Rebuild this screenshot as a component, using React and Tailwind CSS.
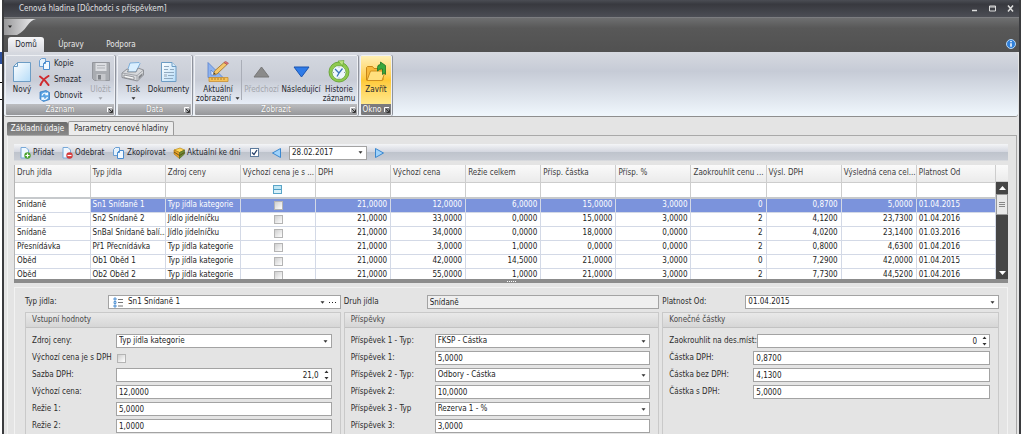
import React from 'react'

const columns = [
  'Druh jídla', 'Typ jídla', 'Zdroj ceny', 'Výchozí cena je s ...', 'DPH', 'Výchozí cena', 'Režie celkem',
  'Přísp. částka', 'Přísp. %', 'Zaokrouhlit cenu ...', 'Výsl. DPH', 'Výsledná cena cel...', 'Platnost Od',
]

const rows = [
  ['Snídaně', 'Sn1 Snídaně 1', 'Typ jídla kategorie', null, '21,0000', '12,0000', '6,0000', '15,0000', '3,0000', '0', '0,8700', '5,0000', '01.04.2015'],
  ['Snídaně', 'Sn2 Snídaně 2', 'Jídlo jídelníčku', null, '21,0000', '33,0000', '0,0000', '15,0000', '3,0000', '2', '4,1200', '23,7300', '01.04.2016'],
  ['Snídaně', 'SnBal Snídaně balí...', 'Jídlo jídelníčku', null, '21,0000', '34,0000', '0,0000', '18,0000', '0,0000', '2', '4,0200', '23,1400', '01.03.2016'],
  ['Přesnídávka', 'Př1 Přecnídávka', 'Typ jídla kategorie', null, '21,0000', '3,0000', '1,0000', '0,0000', '0,0000', '2', '0,8000', '4,6300', '01.04.2016'],
  ['Oběd', 'Ob1 Oběd 1', 'Typ jídla kategorie', null, '21,0000', '42,0000', '14,5000', '21,0000', '3,0000', '0', '7,2900', '42,0000', '01.04.2015'],
  ['Oběd', 'Ob2 Oběd 2', 'Typ jídla kategorie', null, '21,0000', '55,0000', '1,0000', '21,0000', '3,0000', '2', '7,7300', '44,5200', '01.04.2016'],
]

const PageIcon = ({ lines }) => (
  <svg width="20" height="22" viewBox="0 0 20 22">
    <defs>
      <linearGradient id="page" x1="0" y1="0" x2="1" y2="1">
        <stop offset="0" stopColor="#ffffff" />
        <stop offset="1" stopColor="#b5dcf8" />
      </linearGradient>
    </defs>
    {lines ? (
      <>
        <path d="M2.500 1.500h10.500l4 4v15h-14.500z" fill="url(#page)" stroke="#6c9cc4" />
        <path d="M13 1.500v4h4" fill="#d6ecfb" stroke="#6c9cc4" />
        <path d="M5 5.500h5M5 8.500h4M11 8.500h4M5 11.500h10M9 14.500h6M5 17.500h9" stroke="#8fa9c0" />
        <path d="M5 13h3v3H5z" fill="#b8c9d8" />
      </>
    ) : (
      <>
        <path d="M5.500 1.500h13v19h-17v-15z" fill="url(#page)" stroke="#6c9cc4" />
        <path d="M1.500 5.500h4v-4z" fill="#e6f4fd" stroke="#6c9cc4" />
      </>
    )}
  </svg>
)

const CopyIcon = () => (
  <svg width="11" height="12" viewBox="0 0 11 12">
    <path d="M.5 2.500l2-2h4v8h-6z" fill="#e6f2fc" stroke="#6b9fd3" />
    <path d="M4.500 5.500l2-2h4v8h-6z" fill="#f2f9ff" stroke="#4a8ccf" />
    <path d="M4.500 5.500h2v-2" fill="none" stroke="#4a8ccf" />
  </svg>
)

const DeleteIcon = () => (
  <svg width="11" height="11" viewBox="0 0 11 11">
    <path d="M1 1.500C4 3.500 7.500 7 9.500 10M9.500 1C6 3 3 6.500 1.500 10" fill="none" stroke="#cf2a2e" strokeWidth="2" strokeLinecap="round" />
  </svg>
)

const RefreshIcon = () => (
  <svg width="11" height="12" viewBox="0 0 11 12">
    <path d="M1 2l6-1.500 3.500 2v7L4.500 11.500 1 9z" fill="#5ba4e3" stroke="#2b71ba" strokeWidth=".7" />
    <path d="M3 5.500a3 3 0 0 1 5-1.500M8.500 2.500v2.200h-2.200M8.500 7a3 3 0 0 1-5 1.500M3 10V7.800h2.200" fill="none" stroke="#f4faff" strokeWidth="1.200" />
  </svg>
)

const SaveIcon = () => (
  <svg width="20" height="21" viewBox="0 0 20 21">
    <path d="M1.500 1.500h17v18h-15l-2-2z" fill="#a9acb1" stroke="#94979d" />
    <path d="M4.500 2h11v8h-11z" fill="#dcdee2" />
    <path d="M6 4.500h8M6 7h8" stroke="#b0b3b8" />
    <path d="M5.500 13h9v6.500h-9z" fill="#c6c8cc" />
    <path d="M7 14h3v4.500h-3z" fill="#7f8287" />
  </svg>
)

const PrinterIcon = () => (
  <svg width="24" height="22" viewBox="0 0 24 22">
    <path d="M9 2l9-.5 1 1L15 11H6z" fill="#d9efff" stroke="#69a3d6" strokeWidth=".8" />
    <path d="M1 12l5-4 1.500.5L6.500 11h8.500l2-4 5.500 2v5l-6 6L1 16.500z" fill="#d8dadd" stroke="#7d8086" strokeWidth=".8" />
    <path d="M1 12l15 2.500 6.500-5.500M16 14.500V20" fill="none" stroke="#94979d" strokeWidth=".8" />
    <path d="M3 14l10 2v2.500L3 16.500z" fill="#f8f8f8" stroke="#777a80" strokeWidth=".7" />
    <path d="M17.500 15.500l4-3.500v2.500L17.500 18.500z" fill="#85888e" />
  </svg>
)

const DesignIcon = () => (
  <svg width="24" height="22" viewBox="0 0 24 22">
    <path d="M2 1.500L2 16.500H17z" fill="#8fb3ee" stroke="#5681cf" strokeWidth=".8" />
    <path d="M5 9v5h5z" fill="#dfe8f8" stroke="#5681cf" strokeWidth=".7" />
    <path d="M7.500 13.500l1-3.500L18 1.500l3 2L11 13z" fill="#f5c76b" stroke="#9a6d27" strokeWidth=".8" />
    <path d="M18 1.500l1.500-1.200 3 2L21 3.500z" fill="#df7779" stroke="#a84c4d" strokeWidth=".6" />
    <path d="M7.500 13.500l.5-1.700 1.500 1z" fill="#333" />
    <path d="M3 16.500h19v4H3z" fill="#f6c259" stroke="#c98f31" strokeWidth=".8" />
    <path d="M6 17v2M9 17v2M12 17v2M15 17v2M18 17v2" stroke="#a06d1e" strokeWidth=".8" />
  </svg>
)

const HistoryIcon = () => (
  <svg width="22" height="24" viewBox="0 0 22 24">
    <circle cx="11" cy="12" r="10" fill="#8fca4f" stroke="#5d9f2b" strokeWidth=".8" />
    <circle cx="11" cy="12.500" r="7" fill="#eff7fd" stroke="#6aa53c" strokeWidth=".8" />
    <path d="M10 1l6-.5-1.500 5.500z" fill="#b8e37d" stroke="#5d9f2b" strokeWidth=".6" />
    <path d="M7 9l4 4 3.500-4.500M11 13l-2 3.500" fill="none" stroke="#3a74b8" strokeWidth="1.300" />
    <path d="M11 6.500v1M11 17.500v1M5 12.500h1M16 12.500h1" stroke="#8b98a5" />
  </svg>
)

const FolderIcon = () => (
  <svg width="22" height="21" viewBox="0 0 22 21">
    <path d="M1.500 19V6.500l1-1h5l1.500 2h9V19z" fill="#f7b93b" stroke="#c98617" />
    <path d="M2 19.500L5.500 10h15L17 19.500z" fill="#ffdf7e" stroke="#cf8f1f" />
    <path d="M12.500 10V6.500q0-3 3-3V1l5 3.500v9l-1-1.500-2 1.500V8q-3-.5-5 2z" fill="#39a83c" stroke="#1c7424" strokeWidth=".8" />
  </svg>
)

const Triangle = ({ d, fill, stroke, w, h }) => (
  <svg width={w} height={h} viewBox={`0 0 ${w} ${h}`}>
    <path d={d} fill={fill} stroke={stroke} strokeLinejoin="round" />
  </svg>
)

const AddIcon = ({ remove }) => (
  <svg width="11" height="12" viewBox="0 0 11 12">
    <path d="M1 .5h5l2.500 2.500v8h-7.500z" fill="#eef7ff" stroke="#79a9d8" />
    <circle cx="7.500" cy="8.500" r="3.200" fill={remove ? '#d43b3b' : '#4aa22e'} />
    <path d={remove ? 'M5.500 8.500h4' : 'M5.500 8.500h4M7.500 6.500v4'} stroke="#fff" strokeWidth="1.200" />
  </svg>
)

const DayIcon = () => (
  <svg width="12" height="12" viewBox="0 0 12 12">
    <path d="M1 3l6-2 4.500 2-5 2.500z" fill="#ffd95c" stroke="#b98512" strokeWidth=".7" />
    <path d="M1 3v4l5.500 4.500v-6z" fill="#e9a52c" stroke="#a5700d" strokeWidth=".6" />
    <path d="M6.500 5.500l5-2.500v4l-5 4.500z" fill="#6c8a35" stroke="#4d6420" strokeWidth=".6" />
    <path d="M1 5l5.500 3.500 5-3" fill="none" stroke="#584010" strokeWidth=".8" />
  </svg>
)

const Caret = ({ color = '#333' }) => (
  <svg width="5" height="3" viewBox="0 0 5 3"><path d="M.5 .3h4L2.500 2.800z" fill={color} /></svg>
)

const BigButton = ({ icon, label, label2, caret, disabled, className = '' }) => (
  <button
    type="button"
    disabled={disabled}
    className={`flex flex-col items-center justify-start pt-[2px] leading-[9px] whitespace-nowrap ${disabled ? 'text-[#a3a6ad]' : 'text-[#26282e]'} ${className}`}
  >
    <span className="flex h-[27px] items-center justify-center">{icon}</span>
    <span>{label}</span>
    {label2 && <span className="flex items-center gap-1">{label2}{caret && <Caret />}</span>}
    {!label2 && caret && <span className="flex h-2 items-center"><Caret color={disabled ? '#a3a6ad' : '#333'} /></span>}
  </button>
)

const SmallButton = ({ icon, label }) => (
  <button type="button" className="flex h-4 items-center gap-1 whitespace-nowrap text-[#26282e]">
    <span className="flex w-[11px] justify-center">{icon}</span>{label}
  </button>
)

const RibbonGroup = ({ title, children, dark }) => (
  <section className="flex flex-col overflow-hidden rounded-[2px] border border-[#eef0f4] shadow-[1px_0_0_#8f939c]">
    <div className="flex h-12 bg-linear-to-b from-[#d3d7df] via-[#c8ccd6] to-[#e8eef7]">{children}</div>
    <h2 className={`flex h-[11px] items-center justify-between text-white ${dark ? 'bg-[#7b7b7d]' : 'bg-linear-to-b from-[#bcbdc0] to-[#96979a] pl-2'}`}>
      <span className="grow text-center [text-shadow:0_0_1px_#666]">{title}</span>
      <svg width="8" height="8" viewBox="0 0 8 8">
        <path d="M1.500 6V1.500H6" fill="none" stroke="#fff" />
        <path d="M3 3l3 3M6.500 3.500v3h-3" fill="none" stroke="#333" />
      </svg>
    </h2>
  </section>
)

const fieldBox = 'h-[14px] w-full min-w-0 rounded-none border border-[#a3a3a3] pl-[2px] text-[#1c1c1c] outline-none'

const TextField = ({ id, value, readOnly }) => (
  <input id={id} defaultValue={value} readOnly={readOnly} className={`${fieldBox} ${readOnly ? 'bg-[#efefef]' : 'bg-white'}`} />
)

const SelectField = ({ id, value, label }) => (
  <span className="relative block w-full">
    <select id={id} aria-label={label} className={`${fieldBox} block appearance-none bg-white`}>
      <option>{value}</option>
    </select>
    <span className="pointer-events-none absolute inset-y-0 right-1 flex items-center"><Caret /></span>
  </span>
)

const SpinField = ({ id, value }) => (
  <span className="relative block w-full">
    <input id={id} defaultValue={value} className={`${fieldBox} block bg-white pr-3 text-right`} />
    <span className="pointer-events-none absolute inset-y-0 right-[3px] flex items-center">
      <svg width="5" height="10" viewBox="0 0 5 10"><path d="M.5 3h4L2.500 .5zM.5 7h4L2.500 9.500z" fill="#333" /></svg>
    </span>
  </span>
)

const tickBox = 'block size-[9px] appearance-none border border-[#b4b4b4] bg-linear-to-br from-[#cfcfcf] to-white'

const Field = ({ id, label, value, kind }) => (
  <div className="flex h-[14px] items-center">
    <label htmlFor={id} className="min-w-[84px] shrink-0 whitespace-nowrap">{label}</label>
    {kind === 'select' && <SelectField id={id} value={value} />}
    {kind === 'spin' && <SpinField id={id} value={value} />}
    {kind === 'check' && <input id={id} type="checkbox" className={`${tickBox} ml-px`} />}
    {!kind && <TextField id={id} value={value} />}
  </div>
)

const TopField = ({ id, label, children }) => (
  <div className="flex h-[14px] items-center">
    <label htmlFor={id} className="w-[83px] shrink-0 whitespace-nowrap">{label}</label>
    {children}
  </div>
)

const Group = ({ title, children }) => (
  <section aria-label={title} className="mt-[3px] flex grow flex-col border border-b-0 border-[#c9c9c9]">
    <h3 className="h-[15px] border-b border-[#c2c2c2] bg-linear-to-b from-[#e9e9e9] to-[#d6d6d6] pl-[6px] leading-[14px] text-[#4a4a4a]">{title}</h3>
    <div className="flex flex-col gap-[3px] pt-[6px] pr-2 pl-[6px]">{children}</div>
  </section>
)

const DataGrid = () => (
  <div className="flex h-[114px] overflow-hidden border-l border-[#b5b5b5] bg-white">
    <table className="w-full table-fixed border-collapse self-start">
      <thead>
        <tr className="h-[17px] bg-linear-to-b from-[#fafafa] to-[#ebebeb]">
          {columns.map((name, i) => (
            <th key={name} scope="col" className={`overflow-hidden border-r border-b border-[#cdcdcd] p-0 pl-[2px] text-left font-normal whitespace-nowrap text-[#3c3c3c] ${i < 12 ? 'w-[7.66%]' : ''}`}>
              {name}
            </th>
          ))}
        </tr>
        <tr className="h-4 border-b-2 border-[#c6c9cc]">
          {columns.map((name, i) => (
            <td key={name} className="border-r border-[#cdcdcd] p-0">
              {i === 3 && (
                <input type="checkbox" aria-label="Filtr výchozí ceny" className="mx-auto block size-[9px] appearance-none border border-[#5aa5c8] bg-[linear-gradient(#bfe6f4_3px,#4f9fc6_3px,#4f9fc6_4px,#d9f1fa_4px)]" />
              )}
            </td>
          ))}
        </tr>
      </thead>
      <tbody>
        {rows.map((row, r) => (
          <tr key={r} className="h-[14px]">
            {row.map((cell, i) => (
              <td
                key={i}
                className={`overflow-hidden border-r border-b border-[#d3d9e6] p-0 whitespace-nowrap ${i > 3 && i < 12 ? 'pr-[3px] text-right' : 'pl-[2px]'} ${r === 0 && i > 0 ? 'bg-[#7b93dc] text-white' : 'text-[#1c1c1c]'}`}
              >
                {i === 3 ? <input type="checkbox" aria-label="Výchozí cena je s DPH" className={`${tickBox} mx-auto`} /> : cell}
              </td>
            ))}
          </tr>
        ))}
      </tbody>
    </table>
    <div className="flex w-3 shrink-0 flex-col bg-[#454545]">
      <div className="h-[17px] border-b border-[#cdcdcd] bg-linear-to-b from-[#fafafa] to-[#ebebeb]" />
      <div className="flex h-3 items-center justify-center"><Triangle w={7} h={4} d="M0 4h7L3.500 0z" fill="#fff" /></div>
      <div className="flex h-[21px] flex-col items-center justify-center gap-px border border-[#999] bg-[#e9e9e9]">
        <span className="h-px w-[6px] bg-[#888]" />
        <span className="h-px w-[6px] bg-[#888]" />
        <span className="h-px w-[6px] bg-[#888]" />
      </div>
      <div className="mt-auto flex h-3 items-center justify-center"><Triangle w={7} h={4} d="M0 0h7L3.500 4z" fill="#fff" /></div>
    </div>
  </div>
)

const Ribbon = () => (
  <div className="mr-px flex gap-[2px] rounded-tr-[3px] rounded-b-[3px] border-b border-[#8e8e8e] bg-linear-to-b from-[#d6d9e0] via-[#c6cbd6] via-30% to-[#f0f7fd] px-px pt-[3px]">
    <RibbonGroup title="Záznam">
      <BigButton className="ml-1 w-6" icon={<PageIcon />} label="Nový" />
      <div className="ml-[5px] flex w-12 flex-col">
        <SmallButton icon={<CopyIcon />} label="Kopie" />
        <SmallButton icon={<DeleteIcon />} label="Smazat" />
        <SmallButton icon={<RefreshIcon />} label="Obnovit" />
      </div>
      <BigButton className="w-[27px]" icon={<SaveIcon />} label="Uložit" caret disabled />
    </RibbonGroup>
    <RibbonGroup title="Data">
      <BigButton className="ml-[2px] w-[26px]" icon={<PrinterIcon />} label="Tisk" caret />
      <BigButton className="w-[45px]" icon={<PageIcon lines />} label="Dokumenty" />
    </RibbonGroup>
    <RibbonGroup title="Zobrazit">
      <BigButton className="w-[46px]" icon={<DesignIcon />} label="Aktuální" label2="zobrazení" caret />
      <span className="my-1 w-px bg-[#a9adb7]" />
      <BigButton className="w-[39px]" disabled icon={<Triangle w={17} h={12} d="M1 11h15L8.500 1z" fill="#8a8a8a" stroke="#777" />} label="Předchozí" />
      <BigButton className="w-10" icon={<Triangle w={17} h={12} d="M1 1h15L8.500 11z" fill="#2f7be8" stroke="#1b55b0" />} label="Následující" />
      <BigButton className="w-9" icon={<HistoryIcon />} label="Historie" label2="záznamu" />
    </RibbonGroup>
    <RibbonGroup title="Okno" dark>
      <BigButton className="w-[30px] bg-linear-to-b from-[#fff0b4] via-[#ffc935] to-[#ffe98a]" icon={<FolderIcon />} label="Zavřít" />
    </RibbonGroup>
  </div>
)

const Toolbar = () => (
  <div className="mb-1 flex h-[17px] items-center bg-[linear-gradient(#f4f5f7,#d3d6df_8px,#bec3cc_8px,#c9cdd5_16px,#e6e6e6)] pl-[6px] whitespace-nowrap text-[#26282e]">
    <button type="button" className="flex w-[42px] items-center gap-[2px]"><AddIcon />Přidat</button>
    <button type="button" className="flex w-[51px] items-center gap-[2px]"><AddIcon remove />Odebrat</button>
    <button type="button" className="flex w-[60px] items-center gap-[3px]"><CopyIcon />Zkopírovat</button>
    <label htmlFor="to-day" className="flex w-[77px] items-center gap-[2px]"><DayIcon />Aktuální ke dni</label>
    <span className="relative block size-[9px]">
      <input id="to-day" type="checkbox" defaultChecked className="block size-[9px] appearance-none border border-[#5c7a9c] bg-white" />
      <svg className="pointer-events-none absolute inset-0" width="9" height="9" viewBox="0 0 9 9"><path d="M2 4.500l2 2 3-4.500" fill="none" stroke="#26406b" strokeWidth="1.300" /></svg>
    </span>
    <button type="button" aria-label="Předchozí den" className="ml-3"><Triangle w={11} h={12} d="M9.500 1.500v9L1.500 6z" fill="#9fd2fa" stroke="#3a87cf" /></button>
    <div className="mx-[7px] w-[78px]"><SelectField id="day" label="Datum" value="28.02.2017" /></div>
    <button type="button" aria-label="Následující den"><Triangle w={11} h={12} d="M1.500 1.500v9l8-4.500z" fill="#9fd2fa" stroke="#3a87cf" /></button>
  </div>
)

const App = () => {
  return (
    <div className="flex h-screen overflow-hidden bg-white font-['DejaVu_Sans_Condensed','Liberation_Sans',sans-serif] text-[8px] leading-[10px] text-[#2c2c2c]">
      <div className="flex w-[2px] shrink-0 flex-col pt-[18px]">
        <span className="mt-[34px] h-3 bg-[#2d4f9b]" />
        <span className="mt-[18px] h-px bg-black" />
        <span className="mt-4 h-px bg-black" />
      </div>
      <div className="flex min-w-0 grow flex-col border-x-2 border-[#3a3b3e] bg-[#535353]">
        <header className="flex h-[18px] shrink-0 items-center justify-between border-b border-[#7c7d80] bg-linear-to-b from-[#4b4d54] via-[#38393f] via-25% to-[#4c4e55] pr-[5px] pl-[15px] text-[#e2e2e4]">
          <h1>Cenová hladina [Důchodci s příspěvkem]</h1>
          <div className="flex gap-[11px]">
            <button type="button" aria-label="Minimalizovat"><svg width="7" height="7" viewBox="0 0 7 7"><path d="M1 5.500h5" stroke="#ddd" strokeWidth="1.500" /></svg></button>
            <button type="button" aria-label="Maximalizovat"><svg width="7" height="7" viewBox="0 0 7 7"><path d="M.5 1h6v5h-6zM.5 2h6" fill="none" stroke="#ddd" /></svg></button>
            <button type="button" aria-label="Zavřít okno"><svg width="7" height="7" viewBox="0 0 7 7"><path d="M1 .5l5 6M6 .5l-5 6" stroke="#ddd" strokeWidth="1.500" /></svg></button>
          </div>
        </header>
        <div className="flex h-[34px] shrink-0 flex-col justify-between bg-linear-to-b from-[#6e6f70] via-[#585858] via-30% to-[#515151]">
          <svg width="32" height="17" viewBox="0 0 32 17">
            <defs>
              <linearGradient id="quick" x1="0" y1="0" x2="1" y2="0">
                <stop offset="0" stopColor="#98989a" />
                <stop offset="1" stopColor="#f0f0f2" />
              </linearGradient>
            </defs>
            <path d="M0 1h32q-5 1-9 7t-10 9H0z" fill="url(#quick)" />
            <path d="M4 7.500h4l-2 2.500z" fill="#222" />
          </svg>
          <nav className="flex items-end pr-[3px] pl-1 leading-[15px] text-[#e8e8e8]">
            <a href="#domu" className="w-9 rounded-t-[3px] bg-linear-to-b from-[#f6f6f8] to-[#d8dae0] text-center text-[#26282e]">Domů</a>
            <a href="#upravy" className="w-[54px] text-center">Úpravy</a>
            <a href="#podpora" className="w-[46px] text-center">Podpora</a>
            <button type="button" aria-label="Informace" className="mb-[3px] ml-auto">
              <svg width="10" height="10" viewBox="0 0 10 10">
                <circle cx="5" cy="5" r="4.500" fill="#2f7ed8" stroke="#b9d8f5" />
                <path d="M5 4.200v3.600M5 2v1.300" stroke="#fff" strokeWidth="1.500" />
              </svg>
            </button>
          </nav>
        </div>
        <main className="flex min-h-0 grow flex-col bg-[#e4e4e4]">
          <Ribbon />
          <div className="mt-1 flex items-end pl-[3px] leading-[13px]" role="tablist">
            <button type="button" role="tab" className="h-[13px] w-[61px] rounded-t-[2px] bg-linear-to-b from-[#6a6a6a] to-[#8a8a8a] text-center whitespace-nowrap text-white">Základní údaje</button>
            <button type="button" role="tab" aria-selected="true" className="h-[14px] rounded-t-[2px] border border-b-0 border-[#9a9a9a] bg-[#ececec] px-[5px] whitespace-nowrap">Parametry cenové hladiny</button>
          </div>
          <div className="mr-[2px] ml-[3px] flex min-h-0 grow flex-col border-t border-r border-l border-[#a9a9a9] border-l-[#f2f2f2] pt-2 pr-2 pl-[6px]">
            <Toolbar />
            <DataGrid />
            <div className="flex h-1 shrink-0 items-center justify-center gap-px bg-[#8c8c8c]">
              <span className="size-px bg-white" />
              <span className="size-px bg-white" />
              <span className="size-px bg-white" />
              <span className="size-px bg-white" />
              <span className="size-px bg-white" />
            </div>
            <form className="mt-1 grid grow grid-cols-[15fr_15fr_16fr] gap-[3px] border border-b-0 border-[#f2f2f2] pt-[7px] pr-2 pl-[10px]">
              <div className="flex flex-col">
                <TopField id="typ" label="Typ jídla:">
                  <span className="flex h-[14px] w-full items-center border border-[#a3a3a3] bg-white pr-1 pl-1">
                    <svg width="10" height="11" viewBox="0 0 10 11">
                      <path d="M1 1h2v2H1zM1 4.500h2v2H1zM1 8h2v2H1z" fill="#d7e9fb" stroke="#3c84cc" strokeWidth=".8" />
                      <path d="M5 2.500h5M5 5.500h5M5 9h5" stroke="#777" />
                    </svg>
                    <select id="typ" className="h-3 grow appearance-none pl-[5px] text-[#1c1c1c]"><option>Sn1 Snídaně 1</option></select>
                    <Caret />
                    <button type="button" aria-label="Vybrat typ jídla" className="ml-1 flex gap-[2px]">
                      <span className="size-px bg-[#222]" />
                      <span className="size-px bg-[#222]" />
                      <span className="size-px bg-[#222]" />
                    </button>
                  </span>
                </TopField>
                <Group title="Vstupní hodnoty">
                  <Field id="zdroj" label="Zdroj ceny:" value="Typ jídla kategorie" kind="select" />
                  <Field id="sdph" label="Výchozí cena je s DPH" kind="check" />
                  <Field id="sazba" label="Sazba DPH:" value="21,0" kind="spin" />
                  <Field id="cena" label="Výchozí cena:" value="12,0000" />
                  <Field id="rezie1" label="Režie 1:" value="5,0000" />
                  <Field id="rezie2" label="Režie 2:" value="1,0000" />
                </Group>
              </div>
              <div className="flex flex-col">
                <TopField id="druh" label="Druh jídla"><TextField id="druh" value="Snídaně" readOnly /></TopField>
                <Group title="Příspěvky">
                  <Field id="p1t" label="Příspěvek 1 - Typ:" value="FKSP - Částka" kind="select" />
                  <Field id="p1" label="Příspěvek 1:" value="5,0000" />
                  <Field id="p2t" label="Příspěvek 2 - Typ:" value="Odbory - Částka" kind="select" />
                  <Field id="p2" label="Příspěvek 2:" value="10,0000" />
                  <Field id="p3t" label="Příspěvek 3 - Typ" value="Rezerva 1 - %" kind="select" />
                  <Field id="p3" label="Příspěvek 3:" value="3,0000" />
                </Group>
              </div>
              <div className="flex flex-col">
                <TopField id="platnost" label="Platnost Od:"><SelectField id="platnost" value="01.04.2015" /></TopField>
                <Group title="Konečné částky">
                  <Field id="mista" label="Zaokrouhlit na des.míst:" value="0" kind="spin" />
                  <Field id="cdph" label="Částka DPH:" value="0,8700" />
                  <Field id="cbez" label="Částka bez DPH:" value="4,1300" />
                  <Field id="cs" label="Částka s DPH:" value="5,0000" />
                </Group>
              </div>
            </form>
          </div>
        </main>
      </div>
      <div className="w-[2px] shrink-0" />
    </div>
  )
}

export default App
